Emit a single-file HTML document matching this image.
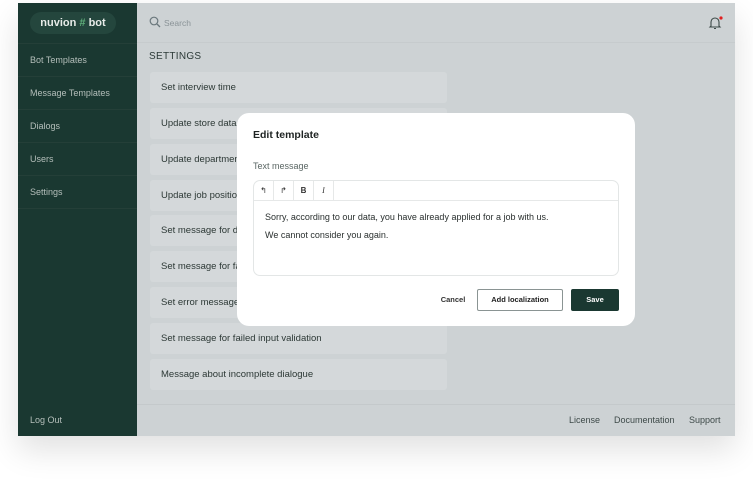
<!DOCTYPE html>
<html><head><meta charset="utf-8"><style>
*{box-sizing:border-box;margin:0;padding:0}
body{width:753px;height:500px;background:#fff;font-family:"Liberation Sans",sans-serif;position:relative;overflow:hidden}
.app{position:absolute;left:18px;top:3px;width:717px;height:433px;background:#cdd2d4;box-shadow:0 14px 30px rgba(0,0,0,.12)}
.side{position:absolute;left:0;top:0;width:119px;height:433px;background:#1a3831}
.logo{position:absolute;left:12px;top:9px;width:86px;height:22px;border-radius:11px;background:#24463d;color:#e8ece9;font-weight:bold;font-size:11px;text-align:center;line-height:22px}
.logo span{color:#5fae7a}
.nav{position:absolute;left:0;width:119px;height:33px;border-top:1px solid #243f38;color:#b5bfbb;font-size:9px;padding-left:12px;line-height:33px}
.top{position:absolute;left:119px;top:0;right:0;height:40px;border-bottom:1px solid #c6cbcd}
.search{position:absolute;left:12px;top:15px;font-size:8.5px;color:#8a9397}
.ttl{position:absolute;left:131px;top:48px;font-size:10px;color:#2c3a38;letter-spacing:.3px}
.item{position:absolute;left:132px;width:297px;height:31px;background:#d4d8da;border-radius:3px;font-size:9.5px;color:#2c3835;line-height:31px;padding-left:11px}
.foot{position:absolute;left:119px;right:0;top:401px;height:32px;border-top:1px solid #c4c9cb;font-size:9px;color:#3e4a49}
.modal{position:absolute;left:237px;top:113px;width:398px;height:213px;background:#fff;border-radius:12px}
.ed{position:absolute;left:16px;top:67px;width:366px;height:96px;border:1px solid #e3e6e6;border-radius:7px}
.tb{height:20px;border-bottom:1px solid #e6e8e8;display:flex}
.tb div{width:20px;border-right:1px solid #e6e8e8;font-size:8px;text-align:center;line-height:19px;color:#333}
.btn{position:absolute;top:176px;height:22px;font-size:7.5px;font-weight:bold;text-align:center;line-height:20px;border-radius:2px}
</style></head><body>
<div class="app">
 <div class="side">
  <div class="logo">nuvion <span>#</span> bot</div>
  <div class="nav" style="top:40px">Bot Templates</div>
  <div class="nav" style="top:73px">Message Templates</div>
  <div class="nav" style="top:106px">Dialogs</div>
  <div class="nav" style="top:139px">Users</div>
  <div class="nav" style="top:172px">Settings</div>
  <div class="nav" style="top:205px;height:1px"></div>
  <div style="position:absolute;left:12px;top:412px;font-size:9px;color:#b5bfbb">Log Out</div>
 </div>
 <div class="top">
  <svg style="position:absolute;left:12px;top:13px" width="12" height="12" viewBox="0 0 12 12"><circle cx="5" cy="5" r="3.8" fill="none" stroke="#6a777c" stroke-width="1.2"/><path d="M8 8l3 3" stroke="#6a777c" stroke-width="1.3"/></svg>
  <div class="search" style="left:27px">Search</div>
  <svg style="position:absolute;left:570px;top:12px" width="16" height="16" viewBox="0 0 16 16"><path d="M4 11V7a4 4 0 0 1 8 0v4l1 1H3z M7 13.5h2" fill="none" stroke="#3c4a48" stroke-width="1.1"/><circle cx="14" cy="3" r="1.6" fill="#e02020"/></svg>
 </div>
 <div class="ttl">SETTINGS</div>
 <div class="item" style="top:69px">Set interview time</div>
 <div class="item" style="top:105px">Update store data</div>
 <div class="item" style="top:141px">Update department</div>
 <div class="item" style="top:177px">Update job position</div>
 <div class="item" style="top:212px">Set message for d</div>
 <div class="item" style="top:248px">Set message for fa</div>
 <div class="item" style="top:284px">Set error message</div>
 <div class="item" style="top:320px">Set message for failed input validation</div>
 <div class="item" style="top:356px">Message about incomplete dialogue</div>
 <div class="foot">
  <span style="position:absolute;left:432px;top:10px">License</span>
  <span style="position:absolute;left:477px;top:10px">Documentation</span>
  <span style="position:absolute;left:552px;top:10px">Support</span>
 </div>
</div>
<div class="modal">
 <div style="position:absolute;left:16px;top:16px;font-size:10.5px;font-weight:bold;color:#1e2322">Edit template</div>
 <div style="position:absolute;left:16px;top:48px;font-size:9px;color:#5a6664">Text message</div>
 <div class="ed">
  <div class="tb"><div>↰</div><div>↱</div><div style="font-weight:bold">B</div><div style="font-style:italic;font-family:'Liberation Serif',serif">I</div></div>
  <div style="padding:7px 11px;font-size:9px;color:#2a302f;line-height:18px">Sorry, according to our data, you have already applied for a job with us.<br>We cannot consider you again.</div>
 </div>
 <div class="btn" style="left:194px;width:44px;color:#333;top:177px">Cancel</div>
 <div class="btn" style="left:240px;width:86px;border:1px solid #8a9493;color:#222">Add localization</div>
 <div class="btn" style="left:334px;width:48px;background:#1a3831;color:#fff;line-height:22px">Save</div>
</div>
</body></html>
